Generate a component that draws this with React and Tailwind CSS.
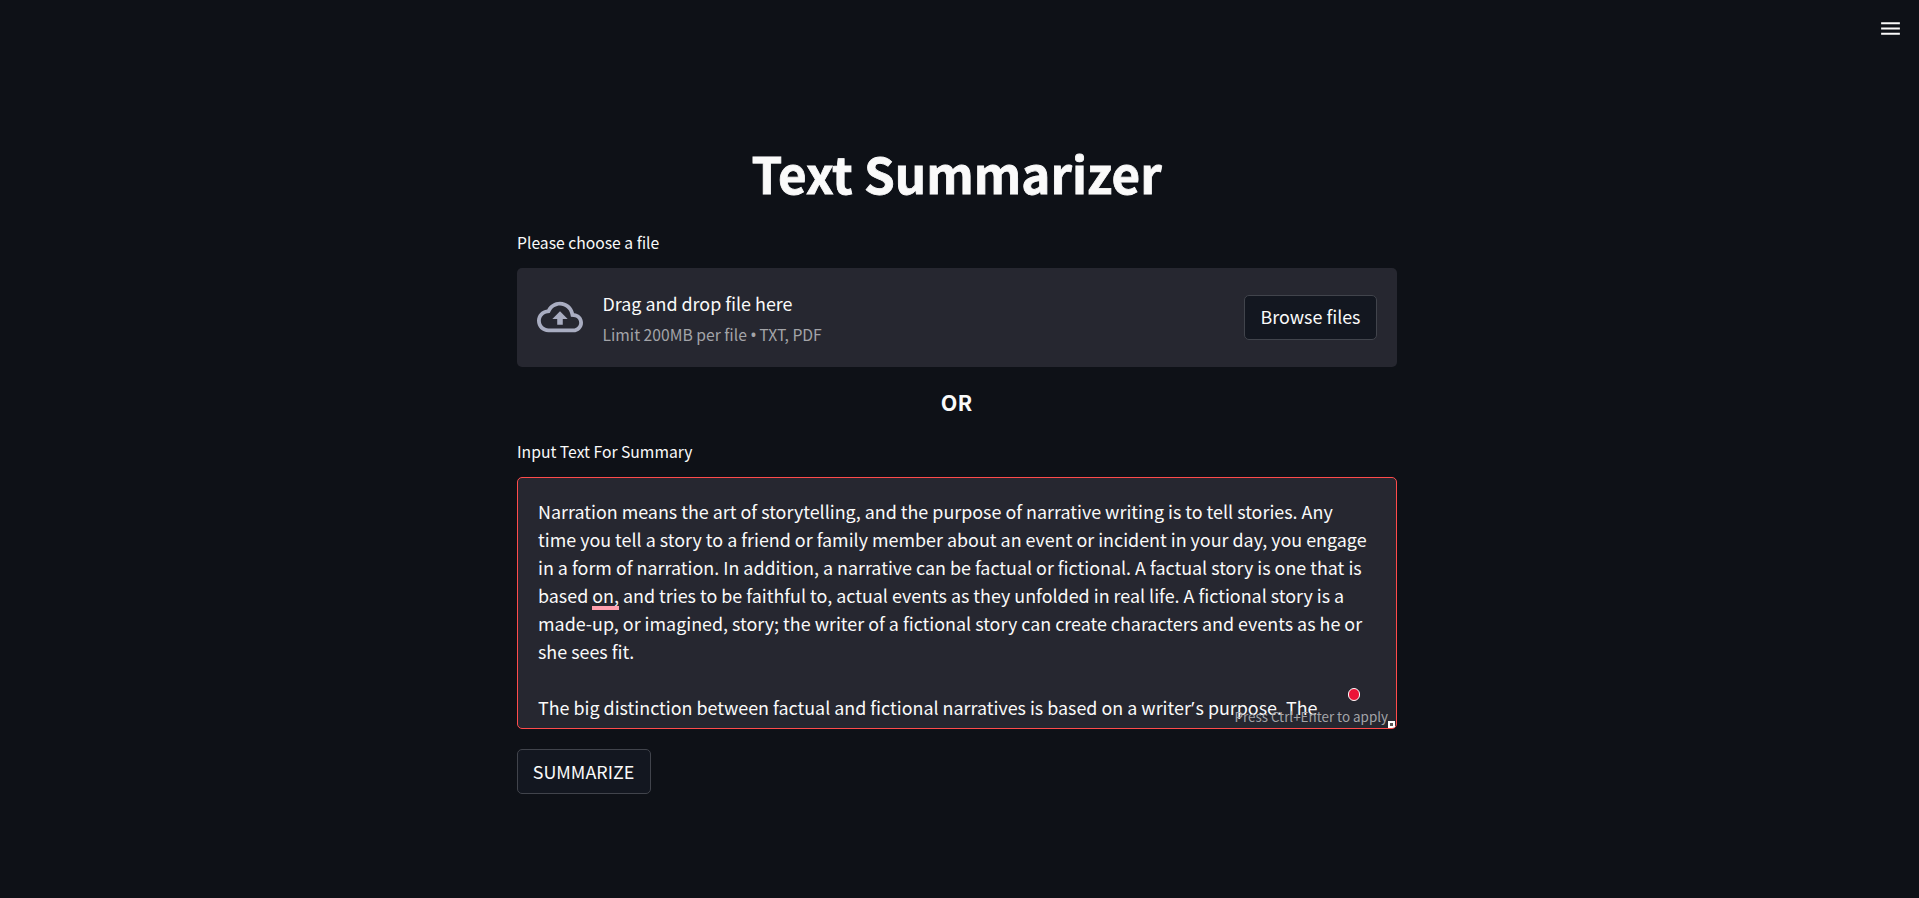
import { MdMenu } from "react-icons/md";

const paragraph = [
  "Narration means the art of storytelling, and the purpose of narrative writing is to tell stories. Any",
  "time you tell a story to a friend or family member about an event or incident in your day, you engage",
  "in a form of narration. In addition, a narrative can be factual or fictional. A factual story is one that is",
];

function Button({ children, className = "" }) {
  return (
    <button
      className={`flex items-center justify-center rounded-[5px] border border-[#41444c] bg-[#131720] text-[17.9px] leading-7 ${className}`}
    >
      {children}
    </button>
  );
}

export default function App() {
  return (
    <div className="flex h-[898px] flex-col overflow-hidden bg-[#0e1117] font-['Noto_Sans_CJK_SC','Open_Sans',sans-serif] text-[#fafafa]">
      <header className="flex justify-end pt-4 pr-4">
        <MdMenu className="size-[25px]" />
      </header>

      <main className="ml-[517px] flex w-[880px] flex-col pt-[99px]">
        <h1 className="pr-px text-center text-[49.3px] leading-[66px] font-bold whitespace-nowrap [-webkit-text-stroke:0.8px_#fafafa]">Text Summarizer</h1>

        <label className="mt-[26px] text-[15.7px] leading-[22px]">Please choose a file</label>
        <section className="mt-[14px] flex h-[99px] items-center rounded-[5px] bg-[#262730] px-5">
          <svg viewBox="0 0 24 24" className="mb-[2px] size-[46px] shrink-0 fill-[#a9adc1]">
            <path d="M19.35 10.04C18.67 6.59 15.64 4 12 4 9.11 4 6.6 5.64 5.35 8.04 2.34 8.36 0 10.91 0 14c0 3.31 2.69 6 6 6h13c2.76 0 5-2.24 5-5 0-2.64-2.05-4.78-4.65-4.96zM19 18H6c-2.21 0-4-1.79-4-4 0-2.05 1.53-3.76 3.56-3.97l1.07-.11.5-.95C8.08 7.14 9.94 6 12 6c2.62 0 4.88 1.86 5.39 4.43l.3 1.5 1.53.11c1.56.1 2.78 1.41 2.78 2.96 0 1.65-1.35 3-3 3zM8 13h2.55v3h2.9v-3H16l-4-4z" />
          </svg>
          <div className="ml-[19.5px] flex flex-col pt-[2px]">
            <span className="text-[17.9px] leading-7">Drag and drop file here</span>
            <span className="mt-[5px] text-[15.7px] leading-[25px] text-[#a3a4a8]">
              Limit 200MB per file <span className="-mr-[0.5px] font-['Open_Sans'] font-semibold">•</span> TXT, PDF
            </span>
          </div>
          <Button className="ml-auto h-[45px] w-[133px] pb-[3px]">Browse files</Button>
        </section>

        <h4 className="mt-[20px] pr-px text-center text-[21.6px] leading-[30px] font-bold">OR</h4>

        <label className="mt-[24px] text-[15.7px] leading-[22px]">Input Text For Summary</label>
        <div className="relative mt-[14px] h-[252px] overflow-hidden rounded-[5px] border border-[#ff4b4b] bg-[#262730] pt-[19px] pl-5 text-[17.9px] leading-7 whitespace-nowrap">
          {paragraph.map((line) => (
            <p key={line}>{line}</p>
          ))}
          <p>
            based <span className="relative">on,<i className="absolute top-[24px] left-0 h-1 w-full bg-[#ff9fae]" /></span> and tries to be faithful to, actual events as they unfolded in real life. A fictional story is a
          </p>
          <p>made-up, or imagined, story; the writer of a fictional story can create characters and events as he or</p>
          <p>she sees fit.</p>
          <p className="mt-7 h-7">
            The big distinction between factual and fictional narratives is based on a writer
            <span className="mr-px ml-[0.5px] font-['Noto_Sans']">’</span>s purpose. The
          </p>
          <span className="absolute right-[8px] bottom-px text-[13.4px] leading-[21px] text-[#a3a4a8]">Press Ctrl+Enter to apply</span>
          <i className="absolute top-[210px] left-[830px] h-[13px] w-3 rounded-full border border-white bg-[#ec1337]" />
          <i className="absolute right-px bottom-0 flex size-[7px] items-center justify-center bg-white">
            <i className="size-[3px] bg-[#555]" />
          </i>
        </div>

        <Button className="mt-5 h-[45px] w-[134px] pr-px pb-px">SUMMARIZE</Button>
      </main>
    </div>
  );
}
